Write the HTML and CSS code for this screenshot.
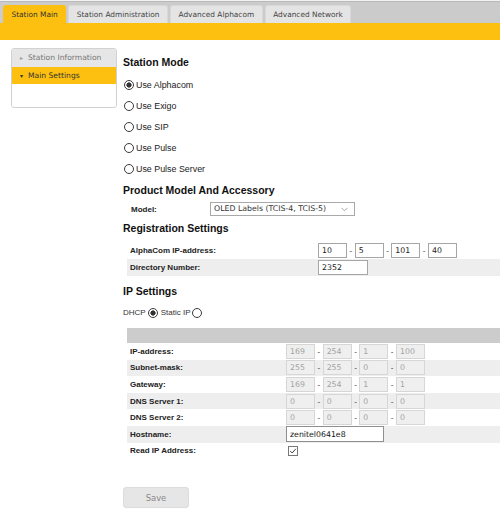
FILE: index.html
```html
<!DOCTYPE html>
<html>
<head>
<meta charset="utf-8">
<link rel="stylesheet" href="styles.css">
</head>
<body>
<div class="tabbar">
  <div class="tab active">Station Main</div>
  <div class="tab">Station Administration</div>
  <div class="tab">Advanced Alphacom</div>
  <div class="tab">Advanced Network</div>
</div>
<div class="band"></div>
<div class="page">
  <aside class="side">
    <div class="item closed"><span class="tri">&#9656;</span>Station Information</div>
    <div class="item open"><span class="tri">&#9662;</span>Main Settings</div>
  </aside>
  <main class="content">
    <h3 class="h first">Station Mode</h3>
    <div class="modes">
      <label class="opt"><input type="radio" name="mode" class="rd" checked>Use Alphacom</label>
      <label class="opt"><input type="radio" name="mode" class="rd">Use Exigo</label>
      <label class="opt"><input type="radio" name="mode" class="rd">Use SIP</label>
      <label class="opt"><input type="radio" name="mode" class="rd">Use Pulse</label>
      <label class="opt"><input type="radio" name="mode" class="rd">Use Pulse Server</label>
    </div>
    <h3 class="h prod">Product Model And Accessory</h3>
    <div class="model">
      <span class="lbl mlbl">Model:</span>
      <div class="selwrap">
        <select class="sel"><option>OLED Labels (TCIS-4, TCIS-5)</option></select>
        <svg class="chev" width="7" height="5" viewBox="0 0 7 5"><polyline points="0.5,0.8 3.5,3.8 6.5,0.8" fill="none" stroke="#9a9a9a" stroke-width="0.9"/></svg>
      </div>
    </div>
    <h3 class="h reg">Registration Settings</h3>
    <div class="tbl regtbl">
      <div class="row">
        <span class="lbl">AlphaCom IP-address:</span>
        <div class="ip">
          <input class="box" value="10"><span class="sep">-</span><input class="box" value="5"><span class="sep">-</span><input class="box" value="101"><span class="sep">-</span><input class="box" value="40">
        </div>
      </div>
      <div class="row alt">
        <span class="lbl">Directory Number:</span>
        <input class="box dir" value="2352">
      </div>
    </div>
    <h3 class="h ipset">IP Settings</h3>
    <div class="dhcp">
      <span>DHCP</span><input type="radio" name="ipm" class="rd" checked><span class="st">Static IP</span><input type="radio" name="ipm" class="rd">
    </div>
    <div class="tbl iptbl">
      <div class="hdr"></div>
      <div class="row">
        <span class="lbl">IP-address:</span>
        <div class="ip"><input class="box dis" value="169" disabled><span class="sep">-</span><input class="box dis" value="254" disabled><span class="sep">-</span><input class="box dis" value="1" disabled><span class="sep">-</span><input class="box dis" value="100" disabled></div>
      </div>
      <div class="row alt">
        <span class="lbl">Subnet-mask:</span>
        <div class="ip"><input class="box dis" value="255" disabled><span class="sep">-</span><input class="box dis" value="255" disabled><span class="sep">-</span><input class="box dis" value="0" disabled><span class="sep">-</span><input class="box dis" value="0" disabled></div>
      </div>
      <div class="row">
        <span class="lbl">Gateway:</span>
        <div class="ip"><input class="box dis" value="169" disabled><span class="sep">-</span><input class="box dis" value="254" disabled><span class="sep">-</span><input class="box dis" value="1" disabled><span class="sep">-</span><input class="box dis" value="1" disabled></div>
      </div>
      <div class="row alt">
        <span class="lbl">DNS Server 1:</span>
        <div class="ip"><input class="box dis" value="0" disabled><span class="sep">-</span><input class="box dis" value="0" disabled><span class="sep">-</span><input class="box dis" value="0" disabled><span class="sep">-</span><input class="box dis" value="0" disabled></div>
      </div>
      <div class="row">
        <span class="lbl">DNS Server 2:</span>
        <div class="ip"><input class="box dis" value="0" disabled><span class="sep">-</span><input class="box dis" value="0" disabled><span class="sep">-</span><input class="box dis" value="0" disabled><span class="sep">-</span><input class="box dis" value="0" disabled></div>
      </div>
      <div class="row alt">
        <span class="lbl">Hostname:</span>
        <input class="box host" value="zenitel0641e8">
      </div>
      <div class="row">
        <span class="lbl">Read IP Address:</span>
        <span class="chk"><svg width="10" height="10" viewBox="0 0 10 10"><rect x="0.5" y="0.5" width="9" height="9" fill="#fff" stroke="#777"/><polyline points="2.2,5 4.2,7 7.8,2.8" fill="none" stroke="#444" stroke-width="1"/></svg></span>
      </div>
    </div>
    <button class="save">Save</button>
  </main>
</div>
</body>
</html>
```
FILE: styles.css
```css
html, body {
  margin: 0;
  padding: 0;
  background: #fff;
}
body {
  font-family: "Liberation Sans", Arial, sans-serif;
  color: #222;
  width: 500px;
  overflow: hidden;
}
.tabbar {
  height: 22px;
  background: #cbcbcb;
  border-top: 1px solid #f2f2f2;
  box-shadow: inset 0 1px 0 #b9b9b9;
  display: flex;
  align-items: flex-end;
  gap: 2px;
  padding-left: 3px;
}
.tab {
  height: 18px;
  box-sizing: border-box;
  padding: 0 7.5px;
  line-height: 17px;
  font-family: "DejaVu Sans", Verdana, sans-serif;
  font-size: 7.4px;
  color: #444;
  background: #e4e4e4;
  border: 1px solid #d8d8d8;
  border-bottom: none;
  border-radius: 3px 3px 0 0;
}
.tab.active {
  background: #fdc010;
  border-color: #fdc010;
  color: #333;
}
.band {
  height: 17px;
  background: #fdc010;
}
.page {
  display: flex;
  align-items: flex-start;
  padding-top: 8px;
}
.side {
  margin-left: 11px;
  width: 106px;
  height: 60px;
  box-sizing: border-box;
  border: 1px solid #d2d2d2;
  border-radius: 3px;
  background: #fff;
  flex: none;
  overflow: hidden;
}
.item {
  height: 17.5px;
  line-height: 17px;
  font-family: "DejaVu Sans", Verdana, sans-serif;
  font-size: 7.6px;
  padding-left: 8px;
}
.item .tri {
  display: inline-block;
  width: 8px;
  font-size: 6px;
}
.item.closed {
  background: #e6e6e6;
  color: #777;
}
.item.closed .tri {
  color: #999;
}
.item.open {
  background: #fdc010;
  color: #333;
}
.content {
  margin-left: 6px;
  flex: 1;
  min-width: 0;
}
.h {
  margin: 0;
  font-size: 10.5px;
  font-weight: bold;
  line-height: 12px;
  color: #111;
}
.h.first { margin-top: 8px; }
.modes {
  margin-top: 6px;
  display: flex;
  flex-direction: column;
}
.opt {
  height: 21px;
  display: flex;
  align-items: center;
  font-size: 8.9px;
  color: #222;
}
.rd {
  -webkit-appearance: none;
  appearance: none;
  width: 10px;
  height: 10px;
  margin: 0 2px 0 1px;
  box-sizing: border-box;
  border: 1px solid #3a3a3a;
  border-radius: 50%;
  background: #fff;
  flex: none;
}
.rd:checked {
  background: radial-gradient(circle, #333 0, #333 2.3px, #fff 2.9px);
}
.h.prod { margin-top: 5px; }
.model {
  margin-top: 6px;
  height: 14px;
  display: flex;
  align-items: center;
}
.lbl {
  font-size: 8px;
  font-weight: bold;
  color: #222;
  flex: none;
}
.mlbl {
  width: 79px;
  padding-left: 8px;
}
.selwrap {
  position: relative;
  display: flex;
  width: 145px;
  height: 14px;
}
.sel {
  display: block;
  -webkit-appearance: none;
  appearance: none;
  width: 145px;
  height: 14px;
  box-sizing: border-box;
  margin: 0;
  padding: 0 0 0 3px;
  border: 1px solid #a9a9a9;
  border-radius: 0;
  background: #fff;
  font-family: "DejaVu Sans", Verdana, sans-serif;
  font-size: 7.8px;
  line-height: 12px;
  color: #333;
}
.chev {
  position: absolute;
  right: 7px;
  top: 5px;
}
.h.reg { margin-top: 6px; }
.tbl {
  margin-left: 4px;
}
.regtbl { margin-top: 8px; }
.row {
  display: flex;
  align-items: center;
}
.regtbl .row { height: 17px; }
.regtbl .lbl { width: 188px; padding-left: 3px; }
.row.alt { background: #eeeeee; }
.ip {
  display: flex;
  align-items: center;
}
.box {
  width: 29px;
  height: 15px;
  box-sizing: border-box;
  margin: 0;
  padding: 0 0 0 3px;
  border: 1px solid #a6a6a6;
  border-radius: 0;
  background: #fff;
  font-family: "DejaVu Sans", Verdana, sans-serif;
  font-size: 7.8px;
  color: #222;
  outline: none;
}
.box.dis {
  background: #efefef;
  border-color: #d6d6d6;
  color: #a3a3a3;
}
.sep {
  width: 7.67px;
  box-sizing: border-box;
  padding-left: 2.5px;
  font-size: 8px;
  color: #333;
}
.box.dir { width: 50px; }
.h.ipset { margin-top: 9px; }
.dhcp {
  margin-top: 9px;
  height: 13px;
  display: flex;
  align-items: center;
  font-size: 8px;
  color: #333;
}
.dhcp .rd {
  margin: 0 3px 0 2px;
}
.iptbl { margin-top: 9px; }
.hdr {
  height: 15px;
  background: #cccccc;
}
.iptbl .row { height: 16.6px; }
.iptbl .lbl { width: 156px; padding-left: 3px; }
.box.host {
  width: 98px;
  height: 16px;
  border-color: #8f8f8f;
  color: #111;
}
.chk {
  display: flex;
  margin-left: 2px;
}
.save {
  display: block;
  margin-top: 28px;
  width: 66px;
  height: 21px;
  border: 1px solid #dcdcdc;
  border-radius: 3px;
  background: #e6e6e6;
  font-family: "DejaVu Sans", Verdana, sans-serif;
  font-size: 8.4px;
  color: #8a8a8a;
  padding: 0;
}
```
